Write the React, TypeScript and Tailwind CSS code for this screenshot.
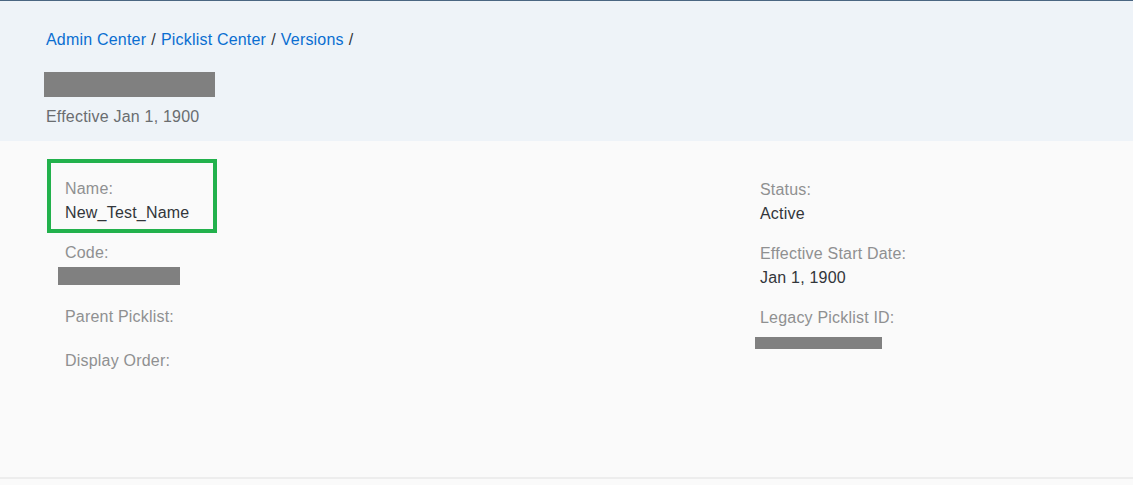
import React from "react";

const font = { fontFamily: '"Liberation Sans", Arial, sans-serif' };

function Field({ label, value, children, empty }: { label: string; value?: string; children?: React.ReactNode; empty?: boolean }) {
  return (
    <div className={empty ? "h-[44px]" : "h-[64px]"}>
      <div className="text-[16px] leading-[24px] text-[#8f9091]">{label}</div>
      {value !== undefined && <div className="text-[16px] leading-[24px] text-[#32363a]">{value}</div>}
      {children}
    </div>
  );
}

export default function App() {
  return (
    <div className="w-[1133px] h-[485px] bg-[#fafafa] flex flex-col overflow-hidden tracking-[0.2px]" style={font}>
      <header className="h-[141px] shrink-0 border-t border-[#4a6682] bg-[#eef3f8] pl-[46px] pt-[29px]">
        <nav className="text-[16px] leading-[20px] text-[#0a6ed1] flex gap-[5px]">
          <span>Admin Center</span>
          <span className="text-[#32363a]">/</span>
          <span>Picklist Center</span>
          <span className="text-[#32363a]">/</span>
          <span>Versions</span>
          <span className="text-[#32363a]">/</span>
        </nav>
        <div className="mt-[22px] -ml-[2px] w-[171px] h-[25px] bg-[#808080]" />
        <div className="mt-[10px] text-[16px] leading-[20px] text-[#6a6d70]">Effective Jan 1, 1900</div>
      </header>
      <main className="h-[338px] shrink-0 border-b-2 border-[#ededed] flex">
        <div className="w-[760px] pl-[47px] pt-[18px]">
          <div className="w-[170px] h-[74px] border-4 border-[#22b14c] pl-[14px] pt-[14px]">
            <div className="text-[16px] leading-[24px] text-[#8f9091]">Name:</div>
            <div className="text-[16px] leading-[24px] text-[#32363a]">New_Test_Name</div>
          </div>
          <div className="pl-[18px] mt-[8px]">
            <Field label="Code:">
              <div className="mt-[2px] -ml-[7px] w-[122px] h-[18px] bg-[#808080]" />
            </Field>
            <Field label="Parent Picklist:" empty />
            <Field label="Display Order:" empty />
          </div>
        </div>
        <div className="pt-[37px]">
          <Field label="Status:" value="Active" />
          <Field label="Effective Start Date:" value="Jan 1, 1900" />
          <Field label="Legacy Picklist ID:">
            <div className="mt-[7px] -ml-[5px] w-[127px] h-[12px] bg-[#808080]" />
          </Field>
        </div>
      </main>
    </div>
  );
}
